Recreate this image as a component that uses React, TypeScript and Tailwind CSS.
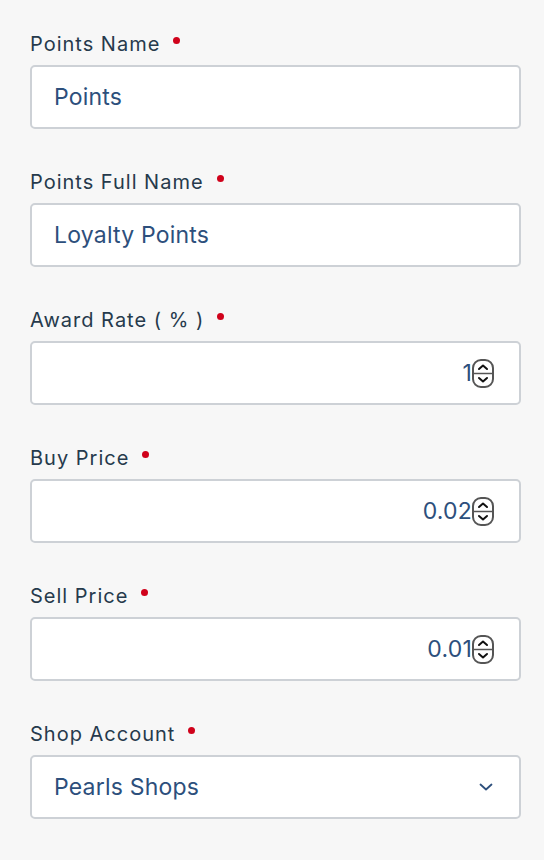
const fields = [
  { label: "Points Name", value: "Points", kind: "text" },
  { label: "Points Full Name", value: "Loyalty Points", kind: "text" },
  { label: "Award Rate ( % )", value: "1", kind: "number" },
  { label: "Buy Price", value: "0.02", kind: "number" },
  { label: "Sell Price", value: "0.01", kind: "number" },
  { label: "Shop Account", value: "Pearls Shops", kind: "select" },
];

function Spinner() {
  return (
    <svg width="22" height="29" viewBox="0 0 22 29" className="shrink-0">
      <rect x="1" y="1" width="20" height="27" rx="8" fill="none" stroke="#555" strokeWidth="2" />
      <line x1="1" y1="14.5" x2="21" y2="14.5" stroke="#555" strokeWidth="1.5" />
      <path d="M7 10 L11 6.5 L15 10" fill="none" stroke="#111" strokeWidth="2" strokeLinecap="round" strokeLinejoin="round" />
      <path d="M7 19 L11 22.5 L15 19" fill="none" stroke="#111" strokeWidth="2" strokeLinecap="round" strokeLinejoin="round" />
    </svg>
  );
}

function Chevron() {
  return (
    <svg width="14" height="8" viewBox="0 0 14 8">
      <path d="M1.5 1.5 L7 6.5 L12.5 1.5" fill="none" stroke="#2d4f7c" strokeWidth="1.8" strokeLinecap="round" strokeLinejoin="round" />
    </svg>
  );
}

export default function App() {
  return (
    <div className="min-h-[860px] bg-[#f7f7f7] px-[30px] pt-[32px] font-['Inter',sans-serif]">
      <div className="flex flex-col gap-[41px]">
        {fields.map((f) => (
          <div key={f.label}>
            <div className="flex h-[24px] items-center text-[20px] leading-[24px] tracking-[1px] text-[#263a4c]">
              {f.label}
              <span className="ml-[13px] mb-[8px] h-[7px] w-[7px] rounded-full bg-[#d0021b]" />
            </div>
            <div className="mt-[9px] flex h-[64px] w-[491px] items-center rounded-[5px] border-2 border-[#cdd1d6] bg-white pl-[22px] pr-[25px] text-[23px] tracking-[0.2px] text-[#2d4f7c]">
              {f.kind === "text" && <span>{f.value}</span>}
              {f.kind === "number" && (
                <>
                  <span className="flex-1 text-right">{f.value}</span>
                  <Spinner />
                </>
              )}
              {f.kind === "select" && (
                <>
                  <span className="flex-1">{f.value}</span>
                  <span className="mr-[1px]">
                    <Chevron />
                  </span>
                </>
              )}
            </div>
          </div>
        ))}
      </div>
    </div>
  );
}
